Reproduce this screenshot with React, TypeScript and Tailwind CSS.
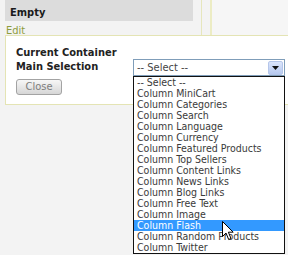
import React from 'react'

const options = [
  '-- Select --',
  'Column MiniCart',
  'Column Categories',
  'Column Search',
  'Column Language',
  'Column Currency',
  'Column Featured Products',
  'Column Top Sellers',
  'Column Content Links',
  'Column News Links',
  'Column Blog Links',
  'Column Free Text',
  'Column Image',
  'Column Flash',
  'Column Random Products',
  'Column Twitter',
]

const font = { fontFamily: '"DejaVu Sans Condensed", "DejaVu Sans", Tahoma, sans-serif' }

export default function App() {
  const selected = 'Column Flash'

  return (
    <div className="relative w-[288px] h-[255px] overflow-hidden bg-[#f3f3f3] text-[11px] text-[#222]" style={font}>
      {/* top strip: empty slot + neighbour column */}
      <div className="flex h-[35px]">
        <div className="w-[202px] pl-[5px] pr-[8px] border-r border-[#e6e6bc]">
          <div className="h-[21px] bg-[#dcdcdc] pl-[5px] leading-[25px] font-bold text-[#1a1a1a]">Empty</div>
          <a className="block pl-[1px] pt-[4px] leading-[11px] text-[#8e9c3c]">Edit</a>
        </div>
        <div className="w-[8px]" />
        <div className="flex-1 border-l-2 border-[#ececc4] bg-[#f6f6f6]" />
      </div>

      {/* edit popup */}
      <div className="ml-[5px] h-[70px] border border-r-0 border-[#e4e4b4] bg-white pl-[10px] pt-[10px]">
        <div className="h-[13px] leading-[13px] font-bold">Current Container</div>
        <div className="flex h-[17px] items-center">
          <div className="w-[117px] font-bold">Main Selection</div>
          <div className="flex h-[17px] w-[152px] items-center border border-[#7f9db9] bg-white pl-[3px] pr-[1px]">
            <span className="flex-1 leading-[14px] text-[#444]">-- Select --</span>
            <span className="flex h-[14px] w-[15px] items-center justify-center rounded-[2px] border border-[#b5c6ea] bg-gradient-to-b from-[#dbe5fb] to-[#b7c9ef]">
              <svg width="7" height="4" viewBox="0 0 7 4"><path d="M0 0h7L3.5 4z" fill="#111" /></svg>
            </span>
          </div>
        </div>
        <button className="mt-[3px] h-[16px] w-[46px] rounded-[3px] border border-[#a3a3a3] bg-gradient-to-b from-[#f7f7f7] to-[#d6d6d6] leading-[14px] text-[#7d7d7d]">
          Close
        </button>
      </div>

      {/* open select list */}
      <ul className="absolute left-[133px] top-[76px] w-[152px] border border-[#111] bg-white text-[10.5px]">
        {options.map((o) => (
          <li
            key={o}
            className={`h-[11px] pl-[3px] leading-[11px] whitespace-nowrap ${o === selected ? 'bg-[#3399ff] text-white' : 'text-[#3a3a3a]'}`}
          >
            {o}
          </li>
        ))}
      </ul>

      {/* mouse cursor */}
      <svg className="absolute left-[222px] top-[221px]" width="13" height="20" viewBox="0 0 13 20">
        <path d="M0.5 0.5 L0.5 15.5 L4 12 L6.7 18.5 L9 17.5 L6.4 11.2 L11.2 11.2 Z" fill="#fff" stroke="#000" strokeWidth="1" strokeLinejoin="miter" />
      </svg>
    </div>
  )
}
